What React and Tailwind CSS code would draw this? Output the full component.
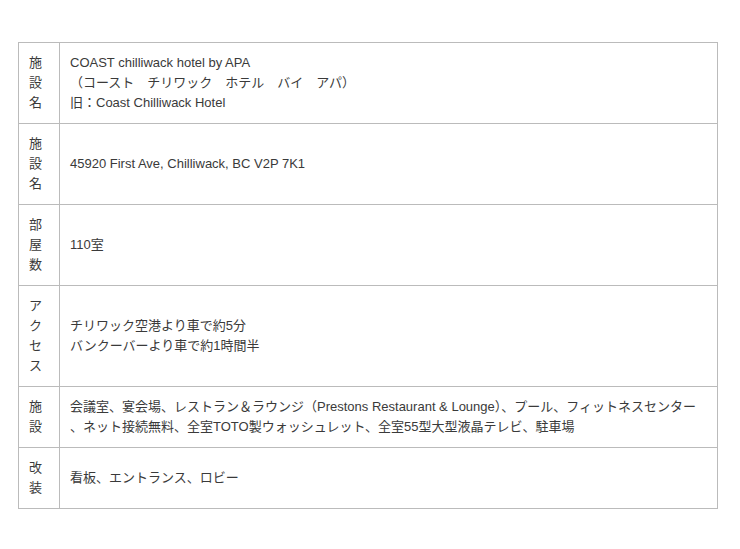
const rows = [
  {
    label: '施設名',
    lines: ['COAST chilliwack hotel by APA', '（コースト　チリワック　ホテル　バイ　アパ）', '旧：Coast Chilliwack Hotel'],
  },
  { label: '施設名', lines: ['45920 First Ave, Chilliwack, BC V2P 7K1'] },
  { label: '部屋数', lines: ['110室'] },
  { label: 'アクセス', lines: ['チリワック空港より車で約5分', 'バンクーバーより車で約1時間半'] },
  {
    label: '施設',
    lines: [
      '会議室、宴会場、レストラン＆ラウンジ（Prestons Restaurant & Lounge）、プール、フィットネスセンター',
      '、ネット接続無料、全室TOTO製ウォッシュレット、全室55型大型液晶テレビ、駐車場',
    ],
  },
  { label: '改装', lines: ['看板、エントランス、ロビー'] },
]

export default function App() {
  return (
    <div className="min-h-screen bg-white pt-[42px] pl-[18px] pr-[22px] text-[#3a3a3a] text-[13px] leading-[20px] font-['Liberation_Sans','Noto_Sans_CJK_JP',sans-serif]">
      <table className="w-[700px] border-collapse border border-[#bbb]">
        <tbody>
          {rows.map((row, i) => (
            <tr key={i} className="border-t border-[#bbb]">
              <th className="w-[41px] p-[10px] pr-0 align-middle text-left font-normal border-r border-[#bbb]">
                {row.label.split('').map((ch, j) => (
                  <div key={j}>{ch}</div>
                ))}
              </th>
              <td className="p-[10px] align-middle">
                {row.lines.map((line, j) => (
                  <div key={j} className="whitespace-nowrap">{line}</div>
                ))}
              </td>
            </tr>
          ))}
        </tbody>
      </table>
    </div>
  )
}
